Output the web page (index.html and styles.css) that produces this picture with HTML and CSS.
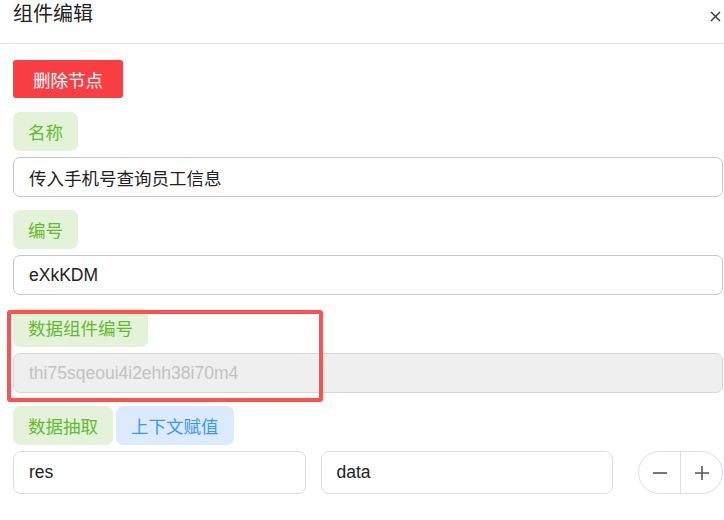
FILE: index.html
```html
<!DOCTYPE html>
<html lang="zh-CN">
<head>
    <meta charset="UTF-8">
    <meta name="viewport" content="width=device-width, initial-scale=1.0">
    <title>组件编辑</title>
    <link rel="stylesheet" href="styles.css">
</head>
<body>

    <!-- 抽屉头部 -->
    <div class="drawer-header">
        <span class="drawer-title">组件编辑</span>
        <span class="drawer-close">
            <svg width="11" height="11" viewBox="0 0 11 11">
                <path d="M1 1 L10 10 M10 1 L1 10" stroke="#333" stroke-width="1.4" fill="none"></path>
            </svg>
        </span>
    </div>

    <!-- 表单 -->
    <div class="drawer-body">
        <button class="btn-danger">删除节点</button>

        <span class="tag tag-green">名称</span>
        <input class="field" type="text" value="传入手机号查询员工信息">

        <span class="tag tag-green">编号</span>
        <input class="field" type="text" value="eXkKDM">

        <div class="marked">
            <span class="tag tag-green">数据组件编号</span>
            <input class="field" type="text" value="thi75sqeoui4i2ehh38i70m4" disabled>
            <div class="mark-box"></div>
        </div>

        <div class="tag-row">
            <span class="tag tag-green">数据抽取</span>
            <span class="tag tag-blue">上下文赋值</span>
        </div>

        <div class="map-row">
            <input class="field field-soft" type="text" value="res">
            <input class="field field-soft" type="text" value="data">
            <div class="counter">
                <span class="counter-btn">
                    <svg width="16" height="16" viewBox="0 0 16 16"><path d="M1 8 H15" stroke="#555" stroke-width="1.6"></path></svg>
                </span>
                <span class="counter-btn">
                    <svg width="16" height="16" viewBox="0 0 16 16"><path d="M1 8 H15 M8 1 V15" stroke="#555" stroke-width="1.6"></path></svg>
                </span>
            </div>
        </div>
    </div>

</body>
</html>
```

FILE: styles.css
```css
body {
    font-family: "Liberation Sans", "Noto Sans CJK SC", sans-serif;
    background-color: #fff;
    color: #333;
    margin: 0;
    padding: 0;
}
.drawer-header {
    display: flex;
    justify-content: space-between;
    align-items: flex-start;
    height: 43px;
    padding: 0 2px 0 13px;
    border-bottom: 1px solid #e4e4e4;
}
.drawer-title {
    font-size: 20px;
    line-height: 28px;
    color: #222;
}
.drawer-close {
    padding: 8px 1px 0 0;
}
.drawer-body {
    display: flex;
    flex-direction: column;
    align-items: flex-start;
    padding: 16px 1px 0 13px;
}
.btn-danger {
    width: 110px;
    height: 38px;
    margin-bottom: 14px;
    background-color: #fa3f44;
    color: #fff;
    border: none;
    border-radius: 3px;
    font-family: inherit;
    font-size: 17.5px;
}
.tag {
    display: inline-flex;
    align-items: center;
    height: 39px;
    padding: 0 15px;
    border-radius: 7px;
    font-size: 17.5px;
    box-sizing: border-box;
}
.tag-green {
    background-color: #e3f2d8;
    color: #62bb2f;
}
.tag-blue {
    background-color: #dbeaff;
    color: #3d96f7;
}
.field {
    display: block;
    width: 100%;
    height: 40px;
    margin: 6px 0 13px;
    padding: 0 15px;
    box-sizing: border-box;
    border: 1px solid #c6c6c6;
    border-radius: 7px;
    font-family: inherit;
    font-size: 17.5px;
    color: #222;
    background-color: #fff;
}
.field:disabled {
    background-color: #efefef;
    border-color: #d8d8d8;
    color: #c2c2c2;
}
.marked {
    position: relative;
    width: 100%;
}
.mark-box {
    position: absolute;
    left: -6px;
    top: 2px;
    width: 308px;
    height: 84px;
    border: 4px solid #fd5252;
    border-radius: 3px;
}
.tag-row {
    display: flex;
    gap: 3px;
}
.map-row {
    display: flex;
    width: 100%;
    gap: 15px;
    margin-top: 6px;
}
.field-soft {
    flex: 1;
    height: 43px;
    margin: 0;
    border-color: #dcdce2;
    border-radius: 8px;
}
.counter {
    display: flex;
    flex-shrink: 0;
    width: 85px;
    height: 43px;
    margin-left: 10px;
    box-sizing: border-box;
    border: 1px solid #dcdce2;
    border-radius: 22px;
}
.counter-btn {
    flex: 1;
    display: flex;
    align-items: center;
    justify-content: center;
}
.counter-btn + .counter-btn {
    border-left: 1px solid #dcdce2;
}
```
